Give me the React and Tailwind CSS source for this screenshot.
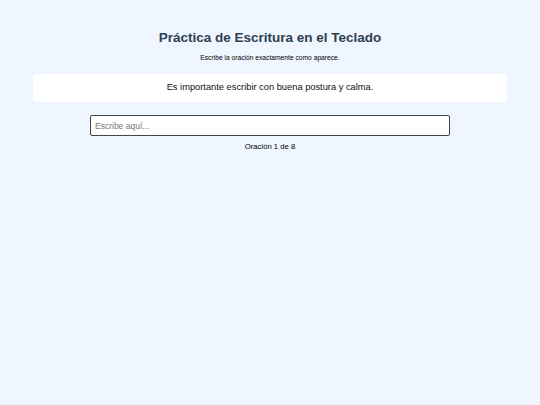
import { useState } from 'react';

const sentences = [
  'Es importante escribir con buena postura y calma.',
  'La práctica diaria mejora la velocidad.',
  'Mantén los dedos sobre la fila guía.',
  'No mires el teclado mientras escribes.',
  'La precisión es más importante que la rapidez.',
  'Respira y relaja los hombros.',
  'Cada error es una oportunidad para aprender.',
  'Escribir bien requiere paciencia.',
];

export default function App() {
  const [index, setIndex] = useState(0);
  const [value, setValue] = useState('');

  const handleChange = (e) => {
    const text = e.target.value;
    if (text === sentences[index] && index < sentences.length - 1) {
      setIndex(index + 1);
      setValue('');
    } else {
      setValue(text);
    }
  };

  return (
    <div
      className="min-h-screen bg-[#eff6ff] px-[33px] pt-[29px] text-center"
      style={{ fontFamily: '"Liberation Sans", Arial, sans-serif' }}
    >
      <h1 className="text-[13.5px] font-bold leading-[17px] text-[#2d3e50]">
        Práctica de Escritura en el Teclado
      </h1>
      <p className="mt-[7px] text-[6.7px] leading-[9px] text-black">
        Escribe la oración exactamente como aparece.
      </p>

      <div className="mt-[12px] flex h-[28px] items-center justify-center rounded-[4px] bg-white text-[9.3px] text-[#111]">
        {sentences[index]}
      </div>

      <input
        type="text"
        value={value}
        onChange={handleChange}
        placeholder="Escribe aquí..."
        className="mx-auto mt-[13px] block h-[21px] w-[360px] rounded-[2px] border border-[#444] bg-white px-[4px] text-[8.5px] text-black outline-none placeholder:text-[#777]"
      />

      <p className="mt-[6px] text-[7.7px] leading-[10px] text-black">
        Oración {index + 1} de {sentences.length}
      </p>
    </div>
  );
}
